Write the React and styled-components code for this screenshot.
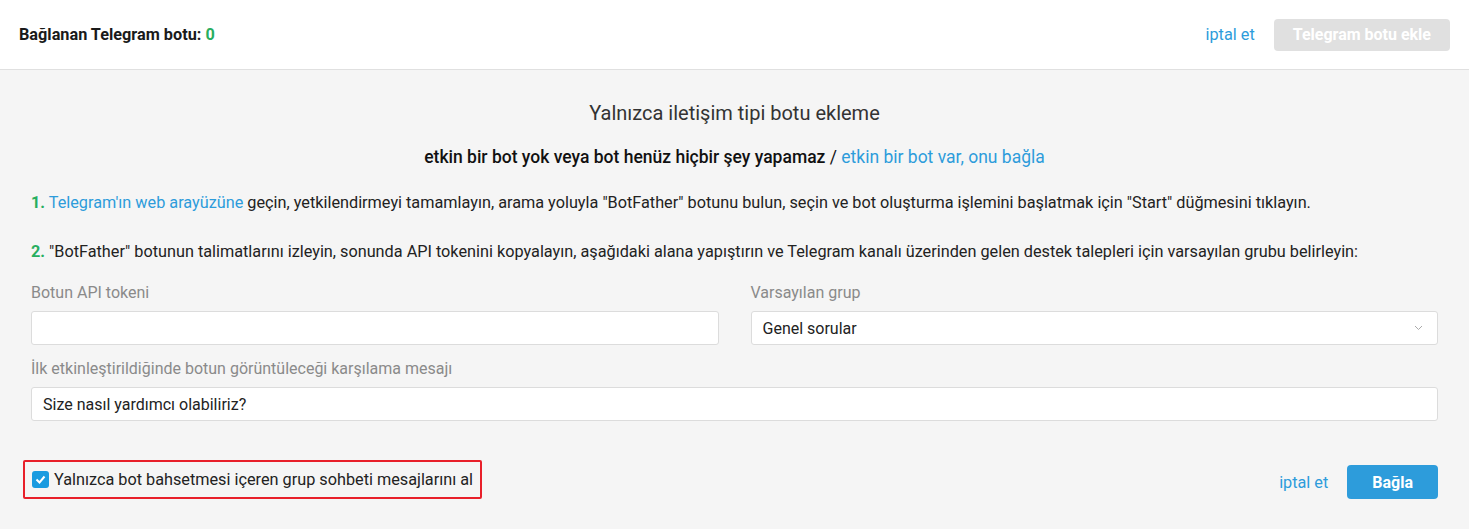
import React, { useState } from "react";
import styled, { createGlobalStyle } from "styled-components";

const Global = createGlobalStyle`
  html, body { margin: 0; padding: 0; background: #f5f5f5; }
  body { font-family: Roboto, "Noto Sans", Arial, sans-serif; color: #222; }
  * { box-sizing: border-box; }
`;

const Header = styled.header`
  height: 70px;
  background: #fff;
  border-bottom: 1px solid #e0e0e0;
  display: flex;
  align-items: center;
  justify-content: space-between;
  padding: 0 19px 0 19px;
`;

const Count = styled.div`
  font-size: 16.25px;
  font-weight: 700;
  color: #1a1a1a;
  span { color: #27ae60; }
`;

const Actions = styled.div`
  display: flex;
  align-items: center;
  gap: 19px;
`;

const LinkButton = styled.a`
  font-size: 16.25px;
  color: #2d9cdb;
  cursor: pointer;
  text-decoration: none;
`;

const Button = styled.button`
  height: ${p => p.$h || 32}px;
  padding: 0 ${p => p.$px || 19}px;
  border: 0;
  border-radius: 4px;
  font-family: inherit;
  font-size: 16px;
  font-weight: 700;
  color: #fff;
  background: ${p => (p.disabled ? "#e0e0e0" : "#2d9cdb")};
  cursor: ${p => (p.disabled ? "default" : "pointer")};
`;

const Body = styled.main`
  padding: 30px 31px 0 31px;
`;

const Title = styled.h2`
  margin: 0;
  text-align: center;
  font-size: 20px;
  font-weight: 400;
  color: #333;
  line-height: 26px;
`;

const Subtitle = styled.p`
  margin: 20px 0 0;
  text-align: center;
  font-size: 17.5px;
  line-height: 22px;
  font-weight: 500;
  color: #111;
  a { color: #2d9cdb; font-weight: 400; text-decoration: none; }
`;

const Slash = styled.span`
  font-weight: 400;
`;

const Step = styled.p`
  margin: ${p => p.$top}px 0 0;
  font-size: 16.25px;
  line-height: 20px;
  color: #222;
  b { color: #27ae60; font-weight: 700; }
  a { color: #2d9cdb; text-decoration: none; }
`;

const Grid = styled.div`
  display: grid;
  grid-template-columns: 1fr 1fr;
  column-gap: 32px;
  margin-top: 21px;
`;

const Field = styled.label`
  display: flex;
  flex-direction: column;
  gap: 8px;
  grid-column: ${p => (p.$wide ? "1 / -1" : "auto")};
  margin-top: ${p => p.$top || 0}px;
`;

const Label = styled.span`
  font-size: 16px;
  color: #8a8a8a;
  line-height: 20px;
  font-weight: 400;
`;

const Input = styled.input`
  height: 34px;
  border: 1px solid #dcdcdc;
  border-radius: 3px;
  background: #fff;
  padding: 0 11px;
  font-family: inherit;
  font-size: 16px;
  color: #222;
  outline: none;
`;

const SelectBox = styled.div`
  height: 34px;
  border: 1px solid #dcdcdc;
  border-radius: 3px;
  background: #fff;
  padding: 0 14px 0 11px;
  display: flex;
  align-items: center;
  justify-content: space-between;
  font-size: 16px;
  color: #222;
`;

const Footer = styled.div`
  display: flex;
  align-items: flex-end;
  justify-content: space-between;
  margin-top: 39px;
  margin-left: -8px;
`;

const Highlight = styled.div`
  height: 39px;
  border: 2px solid #e8202a;
  border-radius: 2px;
  padding: 0 7px;
  display: flex;
  align-items: center;
  gap: 5px;
  font-size: 16.25px;
  color: #222;
`;

const Check = styled.span`
  width: 17px;
  height: 17px;
  border-radius: 3px;
  background: #1a9be0;
  display: inline-flex;
  align-items: center;
  justify-content: center;
`;

export default function App() {
  const [token, setToken] = useState("");
  const [greeting, setGreeting] = useState("Size nasıl yardımcı olabiliriz?");

  return (
    <>
      <Global />
      <Header>
        <Count>
          Bağlanan Telegram botu: <span>0</span>
        </Count>
        <Actions>
          <LinkButton>iptal et</LinkButton>
          <Button disabled>Telegram botu ekle</Button>
        </Actions>
      </Header>
      <Body>
        <Title>Yalnızca iletişim tipi botu ekleme</Title>
        <Subtitle>
          etkin bir bot yok veya bot henüz hiçbir şey yapamaz <Slash>/</Slash>{" "}
          <a href="#">etkin bir bot var, onu bağla</a>
        </Subtitle>
        <Step $top={25}>
          <b>1.</b> <a href="#">Telegram'ın web arayüzüne</a> geçin, yetkilendirmeyi tamamlayın, arama yoluyla
          "BotFather" botunu bulun, seçin ve bot oluşturma işlemini başlatmak için "Start" düğmesini tıklayın.
        </Step>
        <Step $top={29}>
          <b>2.</b> "BotFather" botunun talimatlarını izleyin, sonunda API tokenini kopyalayın, aşağıdaki alana
          yapıştırın ve Telegram kanalı üzerinden gelen destek talepleri için varsayılan grubu belirleyin:
        </Step>
        <Grid>
          <Field>
            <Label>Botun API tokeni</Label>
            <Input value={token} onChange={e => setToken(e.target.value)} />
          </Field>
          <Field>
            <Label>Varsayılan grup</Label>
            <SelectBox>
              Genel sorular
              <svg width="9" height="6" viewBox="0 0 9 6">
                <path d="M1 1l3.5 3.5L8 1" fill="none" stroke="#aaa" strokeWidth="1" />
              </svg>
            </SelectBox>
          </Field>
          <Field $wide $top={14}>
            <Label>İlk etkinleştirildiğinde botun görüntüleceği karşılama mesajı</Label>
            <Input value={greeting} onChange={e => setGreeting(e.target.value)} />
          </Field>
        </Grid>
        <Footer>
          <Highlight>
            <Check>
              <svg width="11" height="9" viewBox="0 0 11 9">
                <path d="M1.5 4.5l3 3 5-6" fill="none" stroke="#fff" strokeWidth="2" />
              </svg>
            </Check>
            Yalnızca bot bahsetmesi içeren grup sohbeti mesajlarını al
          </Highlight>
          <Actions>
            <LinkButton>iptal et</LinkButton>
            <Button $h={34} $px={25}>Bağla</Button>
          </Actions>
        </Footer>
      </Body>
    </>
  );
}
